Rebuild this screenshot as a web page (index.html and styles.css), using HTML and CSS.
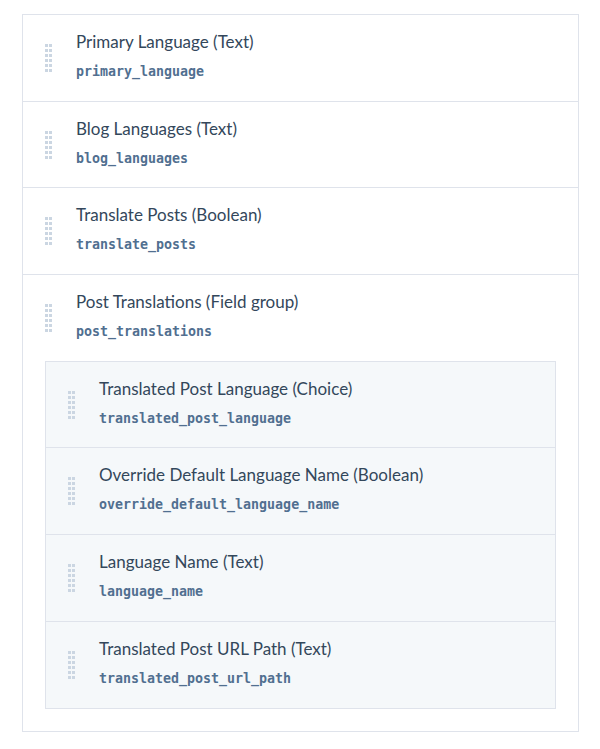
FILE: index.html
```html
<!DOCTYPE html>
<html lang="en">
<head>
    <meta charset="UTF-8">
    <meta name="viewport" content="width=device-width, initial-scale=1.0">
    <title>Field list</title>
    <link rel="stylesheet" href="styles.css">
</head>
<body>
    <div class="field-list">
        <div class="field-row">
            <span class="grip"></span>
            <div class="field-info">
                <div class="field-label">Primary Language (Text)</div>
                <code class="field-name">primary_language</code>
            </div>
        </div>
        <div class="field-row">
            <span class="grip"></span>
            <div class="field-info">
                <div class="field-label">Blog Languages (Text)</div>
                <code class="field-name">blog_languages</code>
            </div>
        </div>
        <div class="field-row">
            <span class="grip"></span>
            <div class="field-info">
                <div class="field-label">Translate Posts (Boolean)</div>
                <code class="field-name">translate_posts</code>
            </div>
        </div>
        <div class="field-group">
            <div class="field-row">
                <span class="grip"></span>
                <div class="field-info">
                    <div class="field-label">Post Translations (Field group)</div>
                    <code class="field-name">post_translations</code>
                </div>
            </div>
            <div class="field-list nested">
                <div class="field-row">
                    <span class="grip"></span>
                    <div class="field-info">
                        <div class="field-label">Translated Post Language (Choice)</div>
                        <code class="field-name">translated_post_language</code>
                    </div>
                </div>
                <div class="field-row">
                    <span class="grip"></span>
                    <div class="field-info">
                        <div class="field-label">Override Default Language Name (Boolean)</div>
                        <code class="field-name">override_default_language_name</code>
                    </div>
                </div>
                <div class="field-row">
                    <span class="grip"></span>
                    <div class="field-info">
                        <div class="field-label">Language Name (Text)</div>
                        <code class="field-name">language_name</code>
                    </div>
                </div>
                <div class="field-row">
                    <span class="grip"></span>
                    <div class="field-info">
                        <div class="field-label">Translated Post URL Path (Text)</div>
                        <code class="field-name">translated_post_url_path</code>
                    </div>
                </div>
            </div>
        </div>
    </div>
</body>
</html>
```

FILE: styles.css
```css
body {
    margin: 0;
    padding: 14px 21px 17px 22px;
    background: #fff;
    font-family: 'Lato', 'Noto Sans', sans-serif;
    color: #33475b;
}

.field-list {
    border: 1px solid #dfe3eb;
    background: #fff;
}

.field-list.nested {
    margin: 0 22px 22px 22px;
    background: #f5f8fa;
}

.field-row {
    display: flex;
    align-items: center;
    height: 85.7px;
    border-bottom: 1px solid #dfe3eb;
}

.field-list > .field-row:last-child {
    border-bottom: none;
}

.field-group > .field-row {
    border-bottom: none;
}

.grip {
    flex-shrink: 0;
    width: 7px;
    height: 28px;
    margin-left: 22px;
    margin-right: 24px;
    background: linear-gradient(to right, #cbd6e2 3px, transparent 3px, transparent 4px, #cbd6e2 4px);
    -webkit-mask: linear-gradient(#000 3px, transparent 3px) 0 0 / 7px 5px repeat-y;
    mask: linear-gradient(#000 3px, transparent 3px) 0 0 / 7px 5px repeat-y;
}

.field-info {
    display: flex;
    flex-direction: column;
}

.field-label {
    font-size: 17px;
    line-height: 22px;
    margin-top: -3px;
}

.field-name {
    margin-top: 9px;
    font-family: 'DejaVu Sans Mono', 'Liberation Mono', monospace;
    font-size: 13.3px;
    font-weight: 600;
    line-height: 20px;
    color: #516f90;
}
```
